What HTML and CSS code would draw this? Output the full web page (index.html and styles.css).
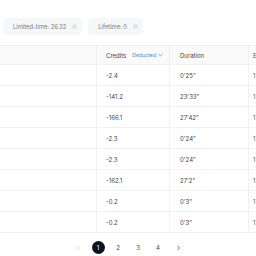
FILE: index.html
```html
<!DOCTYPE html>
<html>
<head>
<meta charset="utf-8">
<link rel="stylesheet" href="styles.css">
</head>
<body>
<div class="page">
  <div class="stats">
    <div class="chip"><span>Limited-time: 26.32</span><span class="info"></span></div>
    <div class="chip"><span>Lifetime: 0</span><span class="info"></span></div>
  </div>
  <div class="table">
    <div class="row head">
      <div class="cell c1"></div>
      <div class="cell c2">Credits <span class="filter">Deducted <svg width="5" height="4" viewBox="0 0 5 4"><path d="M0.6 1 L2.5 2.9 L4.4 1" fill="none" stroke="#4a8fd8" stroke-width="0.7"/></svg></span></div>
      <div class="cell c3">Duration</div>
      <div class="cell c4">E</div>
    </div>
    <div class="row"><div class="cell c1"></div><div class="cell c2">-2.4</div><div class="cell c3">0'25"</div><div class="cell c4">1</div></div>
    <div class="row"><div class="cell c1"></div><div class="cell c2">-141.2</div><div class="cell c3">23'33"</div><div class="cell c4">1</div></div>
    <div class="row"><div class="cell c1"></div><div class="cell c2">-166.1</div><div class="cell c3">27'42"</div><div class="cell c4">1</div></div>
    <div class="row"><div class="cell c1"></div><div class="cell c2">-2.3</div><div class="cell c3">0'24"</div><div class="cell c4">1</div></div>
    <div class="row"><div class="cell c1"></div><div class="cell c2">-2.3</div><div class="cell c3">0'24"</div><div class="cell c4">1</div></div>
    <div class="row"><div class="cell c1"></div><div class="cell c2">-162.1</div><div class="cell c3">27'2"</div><div class="cell c4">1</div></div>
    <div class="row"><div class="cell c1"></div><div class="cell c2">-0.2</div><div class="cell c3">0'3"</div><div class="cell c4">1</div></div>
    <div class="row"><div class="cell c1"></div><div class="cell c2">-0.2</div><div class="cell c3">0'3"</div><div class="cell c4">1</div></div>
  </div>
  <div class="pager">
    <span class="pg arrow"><svg width="5" height="6" viewBox="0 0 5 6"><path d="M3.5 0.8 L1.5 3 L3.5 5.2" fill="none" stroke="#c8c8c8" stroke-width="0.8"/></svg></span>
    <span class="pg"><span class="active">1</span></span>
    <span class="pg">2</span>
    <span class="pg">3</span>
    <span class="pg">4</span>
    <span class="pg arrow"><svg width="5" height="6" viewBox="0 0 5 6"><path d="M1.5 0.8 L3.5 3 L1.5 5.2" fill="none" stroke="#555" stroke-width="0.8"/></svg></span>
  </div>
</div>
</body>
</html>
```
FILE: styles.css
```css
html, body {
  margin: 0;
  padding: 0;
  background: #ffffff;
  overflow: hidden;
}
.page {
  width: 256px;
  height: 256px;
  overflow: hidden;
  font-family: "Inter", "Open Sans", sans-serif;
  color: #444;
}
.stats {
  display: flex;
  gap: 6px;
  padding: 18px 0 0 3px;
}
.chip {
  display: flex;
  align-items: center;
  gap: 6px;
  height: 17px;
  padding: 0 5px 0 10px;
  background: #f6f7f9;
  border-radius: 4px;
  font-size: 5.8px;
  color: #7a7a7a;
}
.info {
  width: 5px;
  height: 5px;
  border-radius: 50%;
  background: #e2e4e8;
}
.table {
  margin-top: 10px;
  width: 340px;
  border-top: 1px solid #efefef;
}
.row {
  box-sizing: border-box;
  display: grid;
  grid-template-columns: 97px 73px 79px 91px;
  height: 21px;
  border-bottom: 1px solid #f2f2f2;
  font-size: 6px;
}
.row.head {
  height: 19px;
  background: #fafafb;
  color: #444;
}
.cell {
  display: flex;
  align-items: center;
  padding-left: 9px;
  border-right: 1px solid #f0f0f0;
  white-space: nowrap;
}
.c3 { padding-left: 10px; }
.c4 { padding-left: 4px; color: #555; }
.filter {
  display: inline-flex;
  align-items: center;
  gap: 2px;
  margin-left: 6px;
  font-size: 5.2px;
  color: #4a8fd8;
}
.pager {
  display: flex;
  justify-content: center;
  margin-top: 8px;
  font-size: 6px;
  color: #444;
}
.pg {
  width: 20px;
  height: 13px;
  display: flex;
  align-items: center;
  justify-content: center;
}
.active {
  width: 13px;
  height: 13px;
  border-radius: 50%;
  background: #0c1424;
  color: #ffffff;
  display: flex;
  align-items: center;
  justify-content: center;
}
```
